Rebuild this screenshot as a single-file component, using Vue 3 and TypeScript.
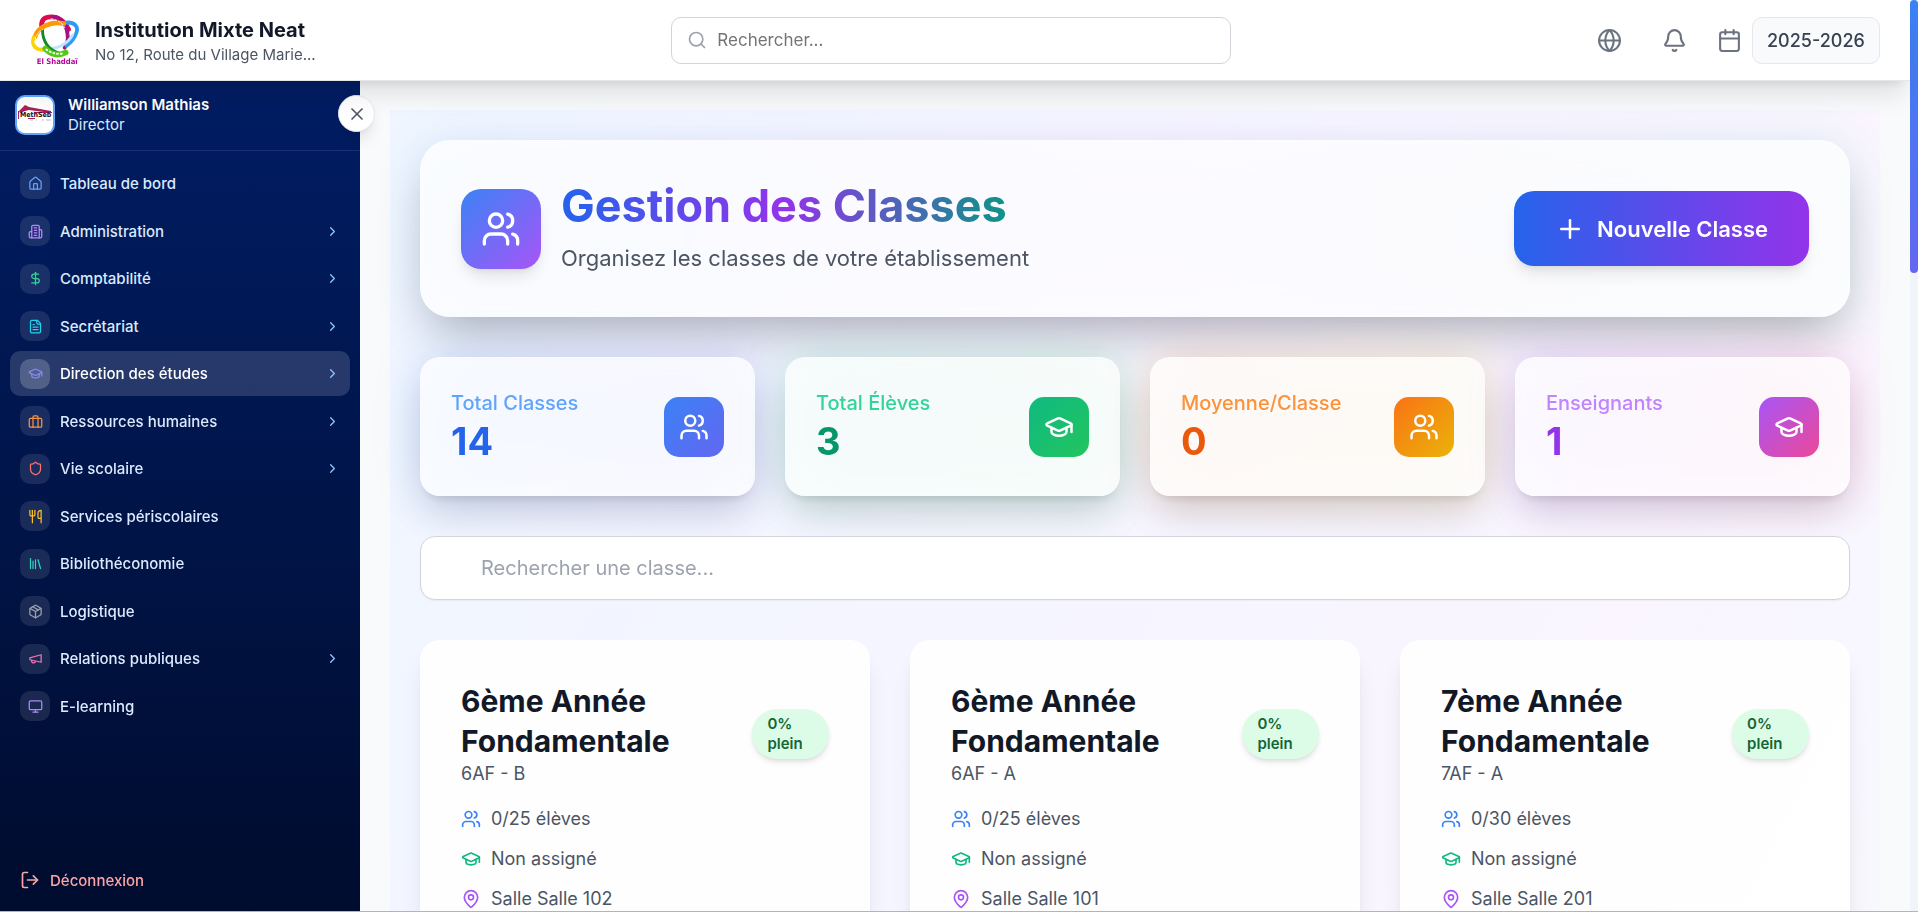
<script setup lang="ts">
import { ref } from 'vue'

type IconName =
  | 'home' | 'building' | 'dollar' | 'file' | 'cap' | 'briefcase' | 'shield' | 'utensils'
  | 'library' | 'box' | 'megaphone' | 'monitor' | 'users' | 'pin'

const icons: Record<IconName, string[]> = {
  home: [
    'M15 21v-8a1 1 0 0 0-1-1h-4a1 1 0 0 0-1 1v8',
    'M3 10a2 2 0 0 1 .709-1.528l7-5.999a2 2 0 0 1 2.582 0l7 5.999A2 2 0 0 1 21 10v9a2 2 0 0 1-2 2H5a2 2 0 0 1-2-2z',
  ],
  building: [
    'M6 22V4a2 2 0 0 1 2-2h8a2 2 0 0 1 2 2v18Z',
    'M6 12H4a2 2 0 0 0-2 2v6a2 2 0 0 0 2 2h2',
    'M18 9h2a2 2 0 0 1 2 2v9a2 2 0 0 1-2 2h-2',
    'M10 6h4', 'M10 10h4', 'M10 14h4', 'M10 18h4',
  ],
  dollar: ['M12 2v20', 'M17 5H9.5a3.5 3.5 0 0 0 0 7h5a3.5 3.5 0 0 1 0 7H6'],
  file: [
    'M15 2H6a2 2 0 0 0-2 2v16a2 2 0 0 0 2 2h12a2 2 0 0 0 2-2V7Z',
    'M14 2v4a2 2 0 0 0 2 2h4', 'M10 9H8', 'M16 13H8', 'M16 17H8',
  ],
  cap: [
    'M21.42 10.922a1 1 0 0 0-.019-1.838L12.83 5.18a2 2 0 0 0-1.66 0L2.6 9.08a1 1 0 0 0 0 1.832l8.57 3.908a2 2 0 0 0 1.66 0z',
    'M22 10v6', 'M6 12.5V16a6 3 0 0 0 12 0v-3.5',
  ],
  briefcase: [
    'M4 7h16a2 2 0 0 1 2 2v10a2 2 0 0 1-2 2H4a2 2 0 0 1-2-2V9a2 2 0 0 1 2-2z',
    'M8 21V5a2 2 0 0 1 2-2h4a2 2 0 0 1 2 2v16',
  ],
  shield: [
    'M20 13c0 5-3.5 7.5-7.66 8.95a1 1 0 0 1-.67-.01C7.5 20.5 4 18 4 13V6a1 1 0 0 1 1-1c2 0 4.5-1.2 6.24-2.72a1.17 1.17 0 0 1 1.52 0C14.51 3.81 17 5 19 5a1 1 0 0 1 1 1z',
  ],
  utensils: [
    'M3 2v7c0 1.1.9 2 2 2h4a2 2 0 0 0 2-2V2', 'M7 2v20',
    'M21 15V2a5 5 0 0 0-5 5v6c0 1.1.9 2 2 2h3Zm0 0v7',
  ],
  library: ['m16 6 4 14', 'M12 6v14', 'M8 8v12', 'M4 4v16'],
  box: [
    'M11 21.73a2 2 0 0 0 2 0l7-4A2 2 0 0 0 21 16V8a2 2 0 0 0-1-1.73l-7-4a2 2 0 0 0-2 0l-7 4A2 2 0 0 0 3 8v8a2 2 0 0 0 1 1.73z',
    'M12 22V12', 'm3.3 7 8.7 5 8.7-5', 'm7.5 4.27 9 5.15',
  ],
  megaphone: ['m3 11 18-5v12L3 14v-3z', 'M11.6 16.8a3 3 0 1 1-5.8-1.6'],
  monitor: [
    'M4 3h16a2 2 0 0 1 2 2v10a2 2 0 0 1-2 2H4a2 2 0 0 1-2-2V5a2 2 0 0 1 2-2z',
    'M8 21h8', 'M12 17v4',
  ],
  users: [
    'M16 21v-2a4 4 0 0 0-4-4H6a4 4 0 0 0-4 4v2',
    'M5 7a4 4 0 1 0 8 0a4 4 0 1 0-8 0',
    'M22 21v-2a4 4 0 0 0-3-3.87', 'M16 3.13a4 4 0 0 1 0 7.75',
  ],
  pin: [
    'M20 10c0 4.993-5.539 10.193-7.399 11.799a1 1 0 0 1-1.202 0C9.539 20.193 4 14.993 4 10a8 8 0 0 1 16 0',
    'M9 10a3 3 0 1 0 6 0a3 3 0 1 0-6 0',
  ],
}

interface NavItem { label: string; icon: IconName; tone: string; more?: boolean; active?: boolean }
const nav: NavItem[] = [
  { label: 'Tableau de bord', icon: 'home', tone: 'blue' },
  { label: 'Administration', icon: 'building', tone: 'purple', more: true },
  { label: 'Comptabilité', icon: 'dollar', tone: 'emerald', more: true },
  { label: 'Secrétariat', icon: 'file', tone: 'cyan', more: true },
  { label: 'Direction des études', icon: 'cap', tone: 'indigo', more: true, active: true },
  { label: 'Ressources humaines', icon: 'briefcase', tone: 'orange', more: true },
  { label: 'Vie scolaire', icon: 'shield', tone: 'red', more: true },
  { label: 'Services périscolaires', icon: 'utensils', tone: 'amber' },
  { label: 'Bibliothéconomie', icon: 'library', tone: 'teal' },
  { label: 'Logistique', icon: 'box', tone: 'gray' },
  { label: 'Relations publiques', icon: 'megaphone', tone: 'pink', more: true },
  { label: 'E-learning', icon: 'monitor', tone: 'violet' },
]

interface Stat { label: string; value: number; icon: IconName; theme: string }
const stats: Stat[] = [
  { label: 'Total Classes', value: 14, icon: 'users', theme: 's-blue' },
  { label: 'Total Élèves', value: 3, icon: 'cap', theme: 's-green' },
  { label: 'Moyenne/Classe', value: 0, icon: 'users', theme: 's-orange' },
  { label: 'Enseignants', value: 1, icon: 'cap', theme: 's-purple' },
]

interface SchoolClass { name: string; code: string; count: string; teacher: string; room: string; fill: string }
const classes: SchoolClass[] = [
  { name: '6ème Année Fondamentale', code: '6AF - B', count: '0/25 élèves', teacher: 'Non assigné', room: 'Salle Salle 102', fill: '0% plein' },
  { name: '6ème Année Fondamentale', code: '6AF - A', count: '0/25 élèves', teacher: 'Non assigné', room: 'Salle Salle 101', fill: '0% plein' },
  { name: '7ème Année Fondamentale', code: '7AF - A', count: '0/30 élèves', teacher: 'Non assigné', room: 'Salle Salle 201', fill: '0% plein' },
]

const globalQuery = ref('')
const classQuery = ref('')
const year = ref('2025-2026')
</script>

<template>
  <div class="shell">
    <div class="app">
      <header class="topbar">
        <div class="brand">
          <svg class="brand-logo" viewBox="0 0 54 54" role="img" aria-label="El Shaddaï">
            <g fill="none" stroke-linecap="round">
              <path d="M12 12C12 5 16 3 22 3c8 0 14 5 18 13" stroke="#e00850" stroke-width="5" />
              <path d="M24 3c8 0 14 8 15 18 1 6-1 11-3 14" stroke="#a3127f" stroke-width="4" />
              <path d="M37 9c9-1 14 4 11 11-2 6-6 10-10 13" stroke="#2f9bf2" stroke-width="4" />
              <path d="M44 22c-5 9-15 14-24 14" stroke="#bfe4fb" stroke-width="3" />
              <path d="M35 10C21 7 8 14 5 24" stroke="#fb9a06" stroke-width="5" />
              <path d="M4 24c-3 9 2 14 12 13" stroke="#f8d306" stroke-width="4" />
              <path d="M13 17c0 11 6 20 16 23" stroke="#128a2a" stroke-width="3" />
              <path d="M16 36c6 6 13 8 21 4" stroke="#54c814" stroke-width="6" />
              <path d="M17 37c6 4 11 5 18 4" stroke="#fff" stroke-width="2" stroke-dasharray="1 3" />
              <path d="M5 30c0-6 3-11 8-14" stroke="#fff" stroke-width="1" stroke-dasharray="2 2" />
              <path d="M22 5c7 1 11 4 14 9" stroke="#fff" stroke-width="1" stroke-dasharray="2 2" />
            </g>
            <text x="7" y="52" font-size="8" font-weight="800" font-family="'DejaVu Sans Condensed', 'DejaVu Sans', sans-serif" fill="#b3089b">El Shaddaï</text>
          </svg>
          <div class="brand-text">
            <strong>Institution Mixte Neat</strong>
            <span>No 12, Route du Village Marie...</span>
          </div>
        </div>

        <label class="global-search">
          <svg class="icon" viewBox="0 0 24 24"><circle cx="11" cy="11" r="8" /><path d="m21 21-4.3-4.3" /></svg>
          <input v-model="globalQuery" type="search" placeholder="Rechercher..." aria-label="Rechercher" />
        </label>

        <div class="tools">
          <button class="tool" type="button" aria-label="Langue">
            <svg class="icon" viewBox="0 0 24 24"><circle cx="12" cy="12" r="10" /><path d="M12 2a14.5 14.5 0 0 0 0 20 14.5 14.5 0 0 0 0-20" /><path d="M2 12h20" /></svg>
          </button>
          <button class="tool" type="button" aria-label="Notifications">
            <svg class="icon" viewBox="0 0 24 24"><path d="M10.268 21a2 2 0 0 0 3.464 0" /><path d="M3.262 15.326A1 1 0 0 0 4 17h16a1 1 0 0 0 .74-1.673C19.41 13.956 18 12.499 18 8A6 6 0 0 0 6 8c0 4.499-1.411 5.956-2.738 7.326" /></svg>
          </button>
          <label class="year">
            <svg class="icon" viewBox="0 0 24 24"><path d="M8 2v4" /><path d="M16 2v4" /><rect x="3" y="4" width="18" height="18" rx="2" /><path d="M3 10h18" /></svg>
            <select v-model="year" aria-label="Année scolaire"><option>2025-2026</option></select>
          </label>
        </div>
      </header>

      <div class="body">
        <aside class="sidebar">
          <div class="profile">
            <svg class="avatar" viewBox="0 0 36 36" role="img" aria-label="MethSeb">
              <path d="M2 14 8 8l4 2 22 4v2L12 13l-4 1-5 2z" fill="#a82058" />
              <path d="M1 14h1v8h9v-1h7v1H1zM17 15h18v1H17z" fill="#a82058" />
              <text x="3" y="20" font-size="7" font-weight="700" font-family="'DejaVu Sans Condensed', 'DejaVu Sans', sans-serif" fill="#2a0d1c">MethSeb</text>
              <path d="M13 23h3m3 0h1m5 0h2m2 0h5" stroke="#bbb" stroke-width="1" />
            </svg>
            <div class="who">
              <strong>Williamson Mathias</strong>
              <span>Director</span>
            </div>
            <button class="collapse" type="button" aria-label="Fermer le menu">
              <svg class="icon" viewBox="0 0 24 24"><path d="M18 6 6 18" /><path d="m6 6 12 12" /></svg>
            </button>
          </div>

          <nav class="menu" aria-label="Menu principal">
            <a v-for="item in nav" :key="item.label" href="#" class="menu-item" :class="{ active: item.active }">
              <span class="chip" :class="item.tone">
                <svg class="icon" viewBox="0 0 24 24"><path v-for="d in icons[item.icon]" :key="d" :d="d" /></svg>
              </span>
              <span class="menu-label">{{ item.label }}</span>
              <svg v-if="item.more" class="icon chevron" viewBox="0 0 24 24"><path d="m9 18 6-6-6-6" /></svg>
            </a>
          </nav>

          <button class="logout" type="button">
            <svg class="icon" viewBox="0 0 24 24"><path d="M9 21H5a2 2 0 0 1-2-2V5a2 2 0 0 1 2-2h4" /><path d="m16 17 5-5-5-5" /><path d="M21 12H9" /></svg>
            Déconnexion
          </button>
        </aside>

        <main class="main">
          <div class="page">
            <section class="hero glow">
              <div class="hero-card">
                <div class="hero-icon">
                  <svg class="icon" viewBox="0 0 24 24"><path v-for="d in icons.users" :key="d" :d="d" /></svg>
                </div>
                <div class="hero-text">
                  <h1>Gestion des Classes</h1>
                  <p>Organisez les classes de votre établissement</p>
                </div>
                <button class="primary" type="button">
                  <svg class="icon" viewBox="0 0 24 24"><path d="M5 12h14" /><path d="M12 5v14" /></svg>
                  Nouvelle Classe
                </button>
              </div>
            </section>

            <section class="stats">
              <div v-for="s in stats" :key="s.label" class="glow" :class="s.theme">
                <div class="stat-card">
                  <div>
                    <p class="stat-label">{{ s.label }}</p>
                    <p class="stat-value">{{ s.value }}</p>
                  </div>
                  <div class="stat-icon">
                    <svg class="icon" viewBox="0 0 24 24"><path v-for="d in icons[s.icon]" :key="d" :d="d" /></svg>
                  </div>
                </div>
              </div>
            </section>

            <input v-model="classQuery" class="class-search" type="search" placeholder="Rechercher une classe..." aria-label="Rechercher une classe" />

            <section class="classes">
              <article v-for="c in classes" :key="c.code" class="class-card">
                <div class="class-head">
                  <div class="class-title">
                    <h2>{{ c.name }}</h2>
                    <p>{{ c.code }}</p>
                  </div>
                  <span class="badge">{{ c.fill }}</span>
                </div>
                <ul>
                  <li>
                    <svg class="icon c-blue" viewBox="0 0 24 24"><path v-for="d in icons.users" :key="d" :d="d" /></svg>{{ c.count }}
                  </li>
                  <li>
                    <svg class="icon c-green" viewBox="0 0 24 24"><path v-for="d in icons.cap" :key="d" :d="d" /></svg>{{ c.teacher }}
                  </li>
                  <li>
                    <svg class="icon c-purple" viewBox="0 0 24 24"><path v-for="d in icons.pin" :key="d" :d="d" /></svg>{{ c.room }}
                  </li>
                </ul>
              </article>
            </section>
          </div>
        </main>
      </div>
    </div>
    <div class="scrolltrack"><div class="scrollthumb"></div></div>
  </div>
</template>

<style>
body { overflow: hidden; }
</style>

<style scoped>
* { box-sizing: border-box; }
.shell {
  display: grid;
  grid-template-columns: minmax(0, 1fr) 8px;
  height: 100vh;
  border-bottom: 1px solid #b4b4b4;
  overflow: hidden;
  font-family: Inter, 'Liberation Sans', sans-serif;
  color: #111827;
}
h1, h2, p, ul { margin: 0; padding: 0; }
button, input, select { font: inherit; }
button { border: 0; cursor: pointer; }
.icon {
  display: block;
  flex: none;
  fill: none;
  stroke: currentColor;
  stroke-width: 2;
  stroke-linecap: round;
  stroke-linejoin: round;
}
.app { display: flex; flex-direction: column; min-height: 0; background: #f9fafb; }
.scrolltrack { background: #f1f5f9; }
.scrollthumb { height: 30%; border-radius: 4px; background: linear-gradient(#3b82f6, #6366f1); }

/* Top bar */
.topbar {
  position: relative;
  z-index: 3;
  flex: none;
  display: flex;
  align-items: center;
  justify-content: space-between;
  height: 80px;
  padding: 0 30px;
  background: #fff;
  box-shadow: 0 1px 0 #e5e7eb, 0 20px 25px -5px rgba(0, 0, 0, 0.1), 0 8px 10px -6px rgba(0, 0, 0, 0.1);
}
.brand { display: flex; align-items: center; gap: 13px; }
.brand-logo { width: 52px; height: 52px; }
.brand-text { display: flex; flex-direction: column; padding-top: 4px; }
.brand-text strong { font-size: 20px; font-weight: 700; line-height: 25px; }
.brand-text span { font-size: 15px; line-height: 24px; color: #4b5563; }
.global-search {
  display: flex;
  align-items: center;
  gap: 10px;
  width: 560px;
  height: 47px;
  padding: 0 15px;
  border: 1px solid #d1d5db;
  border-radius: 10px;
  background: #fff;
}
.global-search .icon { width: 20px; height: 20px; color: #9ca3af; }
.global-search input { flex: 1; min-width: 0; padding: 0; border: 0; outline: 0; background: none; font-size: 17px; color: #111827; }
.global-search input::placeholder { color: #757575; }
.tools { display: flex; align-items: center; justify-content: flex-end; gap: 20px; color: #6b7280; }
.tool { display: grid; place-items: center; width: 45px; height: 45px; padding: 0; background: none; color: inherit; }
.tools .icon { width: 25px; height: 25px; }
.year { display: flex; align-items: center; gap: 10px; }
.year select {
  appearance: none;
  height: 47px;
  padding: 0 14px;
  border: 1px solid #e5e7eb;
  border-radius: 10px;
  background: #f9fafb;
  color: #374151;
  font-size: 18px;
  font-weight: 500;
}

/* Sidebar */
.body { flex: 1; display: flex; min-height: 0; }
.sidebar {
  position: relative;
  z-index: 2;
  flex: none;
  display: flex;
  flex-direction: column;
  width: 360px;
  background: linear-gradient(#001d64, #000c2e);
  color: #fff;
}
.profile {
  position: relative;
  flex: none;
  display: flex;
  align-items: center;
  gap: 13px;
  height: 71px;
  padding: 0 15px;
  border-bottom: 1px solid rgba(255, 255, 255, 0.1);
}
.avatar { width: 40px; height: 40px; border: 2px solid #60a5fa; border-radius: 10px; background: #fff; }
.who { display: flex; flex-direction: column; font-size: 15px; line-height: 20px; }
.who strong { font-weight: 600; }
.who span { color: #dbeafe; }
.collapse {
  position: absolute;
  top: 15px;
  right: -15px;
  display: grid;
  place-items: center;
  width: 37px;
  height: 37px;
  padding: 0;
  border: 1px solid #e5e7eb;
  border-radius: 50%;
  background: #fff;
  color: #4b5563;
  box-shadow: 0 10px 15px -3px rgba(0, 0, 0, 0.1), 0 4px 6px -4px rgba(0, 0, 0, 0.1);
}
.collapse .icon { width: 20px; height: 20px; }
.menu {
  display: grid;
  grid-template-rows: repeat(12, 1fr);
  align-items: center;
  height: 570px;
  margin-top: 9px;
  padding: 0 10px;
}
.menu-item {
  display: flex;
  align-items: center;
  gap: 10px;
  height: 45px;
  padding: 0 10px;
  border-radius: 10px;
  color: #dbeafe;
  font-size: 15px;
  font-weight: 500;
  text-decoration: none;
}
.menu-item.active { background: rgba(255, 255, 255, 0.15); color: #fff; }
.chip { display: grid; place-items: center; width: 30px; height: 30px; border-radius: 10px; background: rgba(255, 255, 255, 0.1); }
.active .chip { background: rgba(255, 255, 255, 0.2); }
.chip .icon, .chevron { width: 15px; height: 15px; }
.menu-label { flex: 1; }
.chevron { color: #93c5fd; }
.blue { color: #60a5fa; }
.purple { color: #c084fc; }
.emerald { color: #34d399; }
.cyan { color: #22d3ee; }
.indigo { color: #818cf8; }
.orange { color: #fb923c; }
.red { color: #f87171; }
.amber { color: #fbbf24; }
.teal { color: #2dd4bf; }
.gray { color: #9ca3af; }
.pink { color: #f472b6; }
.violet { color: #a78bfa; }
.logout {
  display: flex;
  align-items: center;
  gap: 10px;
  margin-top: auto;
  padding: 20px 20px 21px;
  background: none;
  color: #fca5a5;
  font-size: 15px;
  font-weight: 500;
}
.logout .icon { width: 20px; height: 20px; }

/* Page */
.main { flex: 1; min-width: 0; padding: 30px 30px 0; overflow: hidden; }
.page {
  display: flex;
  flex-direction: column;
  gap: 40px;
  padding: 30px;
  background: linear-gradient(to bottom right, #eff6ff, #faf5ff, #f0fdfa) 0 0 / 100% 2906px;
}
.glow { position: relative; }
.glow::before {
  content: '';
  position: absolute;
  inset: 0;
  border-radius: 20px;
  background: var(--grad);
  filter: blur(24px);
  opacity: 0.2;
}
.hero { --grad: linear-gradient(to right, #3b82f6, #a855f7, #14b8a6); }
.hero.glow::before { opacity: 0.1; }
.hero-card {
  position: relative;
  display: flex;
  align-items: center;
  gap: 20px;
  padding: 40px;
  border: 1px solid rgba(255, 255, 255, 0.2);
  border-radius: 30px;
  background: rgba(255, 255, 255, 0.8);
  backdrop-filter: blur(24px);
  box-shadow: 0 25px 50px -12px rgba(0, 0, 0, 0.28);
}
.hero-icon {
  display: grid;
  place-items: center;
  width: 80px;
  height: 80px;
  border-radius: 20px;
  background: linear-gradient(to bottom right, #3b82f6, #a855f7);
  color: #fff;
  box-shadow: 0 10px 15px -3px rgba(0, 0, 0, 0.1), 0 4px 6px -4px rgba(0, 0, 0, 0.1);
}
.hero-icon .icon { width: 40px; height: 40px; }
.hero-text { flex: 1; }
h1 {
  width: fit-content;
  background: linear-gradient(to right, #2563eb, #9333ea, #0d9488);
  background-clip: text;
  color: transparent;
  font-size: 45px;
  font-weight: 700;
  line-height: 50px;
}
.hero-text p { margin-top: 10px; font-size: 22px; line-height: 35px; color: #4b5563; }
.primary {
  display: flex;
  align-items: center;
  gap: 12px;
  height: 75px;
  padding: 0 41px;
  border-radius: 20px;
  background: linear-gradient(to right, #2563eb, #9333ea);
  color: #fff;
  font-size: 22px;
  font-weight: 600;
  box-shadow: 0 10px 15px -3px rgba(0, 0, 0, 0.1), 0 4px 6px -4px rgba(0, 0, 0, 0.1);
}
.primary .icon { width: 30px; height: 30px; }

.stats { display: grid; grid-template-columns: repeat(4, 1fr); gap: 30px; }
.stat-card {
  position: relative;
  display: flex;
  align-items: center;
  justify-content: space-between;
  height: 139px;
  padding: 0 30px;
  border: 1px solid rgba(255, 255, 255, 0.2);
  border-radius: 20px;
  background: rgba(255, 255, 255, 0.8);
  backdrop-filter: blur(24px);
  box-shadow: 0 20px 40px -5px rgba(0, 0, 0, 0.14), 0 8px 10px -6px rgba(0, 0, 0, 0.12);
}
.stat-label { font-size: 20px; font-weight: 500; line-height: 30px; color: var(--label); }
.stat-value { font-size: 38px; font-weight: 700; line-height: 47px; color: var(--value); }
.stat-icon { display: grid; place-items: center; width: 60px; height: 60px; border-radius: 15px; background: var(--tile); color: #fff; }
.stat-icon .icon { width: 30px; height: 30px; }
.s-blue { --label: #60a5fa; --value: #2563eb; --grad: linear-gradient(to right, #3b82f6, #6366f1); --tile: linear-gradient(to bottom right, #3b82f6, #6366f1); }
.s-green { --label: #34d399; --value: #059669; --grad: linear-gradient(to right, #10b981, #22c55e); --tile: linear-gradient(to bottom right, #10b981, #22c55e); }
.s-orange { --label: #fb923c; --value: #ea580c; --grad: linear-gradient(to right, #f97316, #eab308); --tile: linear-gradient(to bottom right, #f97316, #eab308); }
.s-purple { --label: #c084fc; --value: #9333ea; --grad: linear-gradient(to right, #a855f7, #ec4899); --tile: linear-gradient(to bottom right, #a855f7, #ec4899); }

.class-search {
  appearance: none;
  position: relative;
  width: 100%;
  height: 64px;
  padding: 0 20px 0 60px;
  border: 1px solid #d1d5db;
  border-radius: 15px;
  outline: 0;
  background: #fff;
  color: #111827;
  font-size: 20px;
  box-shadow: 0 1px 2px rgba(0, 0, 0, 0.05);
}
.class-search::placeholder { color: #9ca3af; }

.classes { display: grid; grid-template-columns: repeat(3, minmax(0, 1fr)); gap: 40px; }
.class-card {
  min-height: 400px;
  padding: 40px;
  border: 1px solid rgba(255, 255, 255, 0.2);
  border-radius: 20px;
  background: rgba(255, 255, 255, 0.9);
  box-shadow: 0 20px 25px -5px rgba(0, 0, 0, 0.1), 0 8px 10px -6px rgba(0, 0, 0, 0.1);
}
.class-head { display: flex; align-items: center; justify-content: space-between; margin-bottom: 20px; }
h2 { font-size: 30px; font-weight: 700; line-height: 40px; }
.class-title p { font-size: 18px; line-height: 25px; color: #4b5563; }
.badge {
  padding: 5px 15px;
  border-radius: 25px;
  background: #dcfce7;
  color: #166534;
  font-size: 15px;
  font-weight: 600;
  line-height: 20px;
  box-shadow: 0 4px 6px -1px rgba(0, 0, 0, 0.1), 0 2px 4px -2px rgba(0, 0, 0, 0.1);
}
ul { display: flex; flex-direction: column; gap: 15px; list-style: none; }
li { display: flex; align-items: center; gap: 10px; font-size: 18px; line-height: 25px; color: #4b5563; }
li .icon { width: 20px; height: 20px; }
.c-blue { color: #3b82f6; }
.c-green { color: #10b981; }
.c-purple { color: #a855f7; }
</style>
